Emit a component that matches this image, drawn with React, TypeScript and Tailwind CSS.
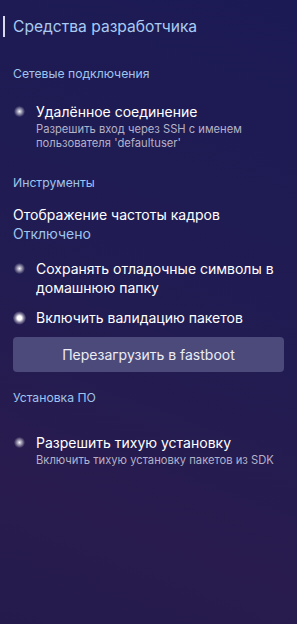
const Glow = ({ bright = false }: { bright?: boolean }) => (
  <span className="flex w-[13px] shrink-0 justify-center">
    {bright ? (
      <span className="block h-[14px] w-[14px] rounded-full bg-[radial-gradient(circle,#ffffff_0%,#ffffff_22%,rgba(255,255,255,0.45)_45%,rgba(255,255,255,0)_72%)]" />
    ) : (
      <span className="block h-[11px] w-[11px] rounded-full bg-[radial-gradient(circle,rgba(255,255,255,0.95)_0%,rgba(255,255,255,0.55)_30%,rgba(255,255,255,0.15)_60%,rgba(255,255,255,0)_75%)]" />
    )}
  </span>
);

const Toggle = ({ title, note, bright }: { title: string; note?: string; bright?: boolean }) => (
  <div className="flex items-start gap-[10px] pl-[13px] pr-3">
    <div className="flex h-[19px] items-center">
      <Glow bright={bright} />
    </div>
    <div>
      <p className="text-[14px] leading-[19px] text-white">{title}</p>
      {note && <p className="mt-[1px] text-[11.2px] leading-[14px] text-[#b4b2c8]">{note}</p>}
    </div>
  </div>
);

const Section = ({ children }: { children: string }) => (
  <h2 className="px-[13px] text-[12.2px] leading-[16px] text-[#9fc4ee]">{children}</h2>
);

export default function App() {
  return (
    <main
      className="min-h-[624px] w-full bg-[linear-gradient(200deg,#1c1a55_0%,#211c52_50%,#291b4e_80%,#241b4c_100%)] pt-[16px]"
      style={{ fontFamily: 'Inter, "Noto Sans", sans-serif' }}
    >
      <div className="flex items-center">
        <span className="ml-[3px] block h-[21px] w-[2px] bg-[#d8d8ee]" />
        <h1 className="ml-[8px] text-[15.6px] leading-[21px] text-[#a9cbf2]">Средства разработчика</h1>
      </div>

      <div className="mt-[29px]">
        <Section>Сетевые подключения</Section>
      </div>
      <div className="mt-[20px]">
        <Toggle title="Удалённое соединение" note="Разрешить вход через SSH с именем пользователя 'defaultuser'" />
      </div>

      <div className="mt-[25px]">
        <Section>Инструменты</Section>
      </div>
      <div className="mt-[14px] px-[13px]">
        <p className="text-[14px] leading-[19px] text-white">Отображение частоты кадров</p>
        <p className="text-[14px] leading-[19px] text-[#9fc4ee]">Отключено</p>
      </div>

      <div className="mt-[16px]">
        <Toggle title="Сохранять отладочные символы в домашнюю папку" />
      </div>
      <div className="mt-[11px]">
        <Toggle title="Включить валидацию пакетов" bright />
      </div>

      <div className="mt-[10px] px-[13px]">
        <button className="flex h-[35px] w-full items-center justify-center rounded-[4px] bg-[#4b4a7b] text-[14px] text-[#ececf4]">
          Перезагрузить в fastboot
        </button>
      </div>

      <div className="mt-[18px]">
        <Section>Установка ПО</Section>
      </div>
      <div className="mt-[27px]">
        <Toggle title="Разрешить тихую установку" note="Включить тихую установку пакетов из SDK" />
      </div>
    </main>
  );
}
